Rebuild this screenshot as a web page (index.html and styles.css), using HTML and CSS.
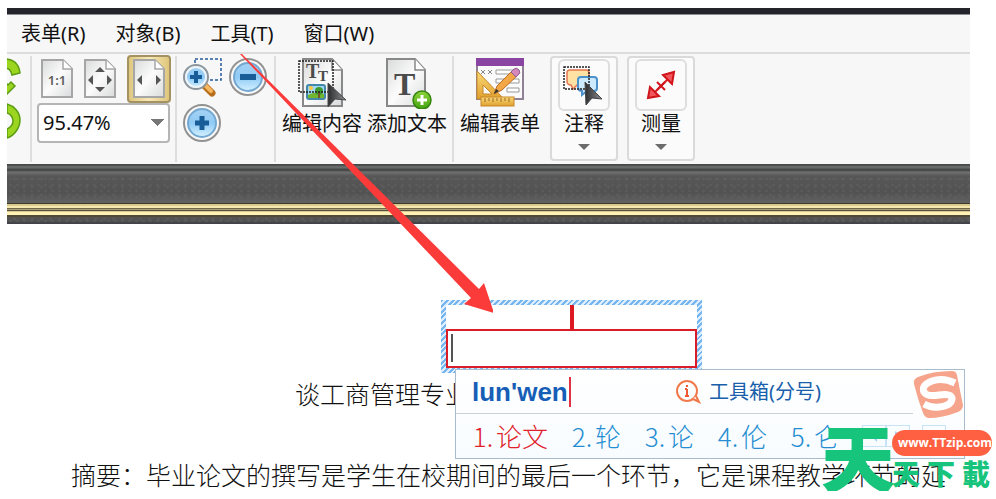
FILE: index.html
```html
<!DOCTYPE html>
<html lang="zh-CN">
<head>
<meta charset="utf-8">
<title>编辑内容</title>
<link rel="stylesheet" href="styles.css">
</head>
<body>
<svg class="defs" aria-hidden="true">
  <defs>
    <linearGradient id="paper" x1="0" y1="0" x2="1" y2="1"><stop offset="0" stop-color="#d9dadb"/><stop offset=".5" stop-color="#fcfcfc"/><stop offset="1" stop-color="#d9dadb"/></linearGradient>
    <linearGradient id="glass" x1="0" y1="0" x2="0" y2="1"><stop offset="0" stop-color="#a5d2f3"/><stop offset=".5" stop-color="#8fcaf6"/><stop offset="1" stop-color="#d4f1ff"/></linearGradient>
    <linearGradient id="dark" x1="0" y1="0" x2="1" y2="0"><stop offset="0" stop-color="#2c2d2f"/><stop offset="1" stop-color="#8b8d90"/></linearGradient>
    <linearGradient id="gold" x1="0" y1="0" x2="0" y2="1"><stop offset="0" stop-color="#fbd978"/><stop offset="1" stop-color="#e0a02d"/></linearGradient>
    <linearGradient id="leaf" x1="0" y1="0" x2="0" y2="1"><stop offset="0" stop-color="#8fd43a"/><stop offset="1" stop-color="#45a313"/></linearGradient>
  </defs>
</svg>
<div class="app">
  <div class="titlebar"></div>
  <nav class="menubar">
    <a href="#form">表单(R)</a><a href="#object">对象(B)</a><a href="#tools">工具(T)</a><a href="#window">窗口(W)</a>
  </nav>
  <div class="toolbar">
    <div class="rotate" aria-hidden="true">
      <svg width="14" height="100" viewBox="0 0 14 100">
        <g fill="#9bd51f" stroke="#5b9c12" stroke-width="1.5">
          <path d="M-4 3C5 2 12 7 13 17L5 19C4 14 2 12-4 12Z"/>
          <path d="M-4 24L1 29 4 26 8 30 -3 41Z"/>
          <path d="M0 48C7 50 13 56 13 64S7 80 0 82V73C4 71 6 68 6 65S4 58 0 57Z"/>
        </g>
      </svg>
    </div>
    <div class="group fit">
      <div class="row">
        <button aria-label="实际大小"><svg width="32" height="40" viewBox="0 0 32 40"><path d="M1 1H22L31 10V38H1Z" fill="url(#paper)" stroke="#a6a6a6" stroke-width="2"/><path d="M22 1V10H31" fill="#fff" stroke="#a6a6a6" stroke-width="1.5"/><text x="16" y="26" text-anchor="middle" class="ratio">1:1</text></svg></button>
        <button aria-label="适合页面"><svg width="32" height="40" viewBox="0 0 32 40"><path d="M1 1H22L31 10V38H1Z" fill="url(#paper)" stroke="#a6a6a6" stroke-width="2"/><path d="M22 1V10H31" fill="#fff" stroke="#a6a6a6" stroke-width="1.5"/><path d="M11 13H21L16 8ZM11 28H21L16 33ZM9 16V26L4 21ZM23 16V26L28 21Z" fill="#555"/></svg></button>
        <button class="selected" aria-label="适合宽度"><svg width="32" height="40" viewBox="0 0 32 40"><path d="M1 1H22L31 10V38H1Z" fill="url(#paper)" stroke="#a6a6a6" stroke-width="2"/><path d="M22 1V10H31" fill="#fff" stroke="#a6a6a6" stroke-width="1.5"/><path d="M9 16V26L4 21ZM23 16V26L28 21Z" fill="#555"/></svg></button>
      </div>
      <select aria-label="缩放比例"><option>95.47%</option><option>100%</option></select>
    </div>
    <div class="group zoom">
      <button aria-label="框选放大"><svg width="40" height="40" viewBox="0 0 40 40"><rect x="13" y="2" width="26" height="21" fill="none" stroke="#245b9b" stroke-width="1.5" stroke-dasharray="3 2"/><path d="M22 28L30 36" stroke="#b86f1c" stroke-width="7" stroke-linecap="round"/><path d="M23 28L29 34" stroke="#f7b75e" stroke-width="4" stroke-linecap="round"/><circle cx="14" cy="20" r="12" fill="url(#glass)" stroke="#8c9399" stroke-width="2"/><circle cx="14" cy="20" r="10" fill="none" stroke="#eef3f6" stroke-width="2"/><path d="M14 14V26M8 20H20" stroke="#195d98" stroke-width="4"/></svg></button>
      <button aria-label="缩小"><svg width="40" height="40" viewBox="0 0 40 40"><circle cx="20" cy="20" r="18" fill="#f8f8f8" stroke="#929292" stroke-width="2"/><circle cx="20" cy="20" r="14" fill="url(#glass)" stroke="#74a8d0" stroke-width="2"/><rect x="12" y="17" width="16" height="6" fill="#195d98"/></svg></button>
      <button aria-label="放大"><svg width="40" height="40" viewBox="0 0 40 40"><circle cx="20" cy="20" r="18" fill="#f8f8f8" stroke="#929292" stroke-width="2"/><circle cx="20" cy="20" r="14" fill="url(#glass)" stroke="#74a8d0" stroke-width="2"/><path d="M20 13V27M13 20H27" stroke="#195d98" stroke-width="5"/></svg></button>
    </div>
    <div class="group edit">
      <button class="tool"><svg width="50" height="52" viewBox="0 0 50 52"><path d="M6 2H35L45 13V49H6Z" fill="url(#paper)" stroke="#888" stroke-width="2"/><path d="M35 2V13H45" fill="#fff" stroke="#888" stroke-width="1.5"/><text x="9" y="21" class="glyph" font-size="20">T</text><text x="21" y="24" class="glyph" font-size="15">T</text><rect x="10" y="28" width="18" height="14" rx="2" fill="#9ed8f2" stroke="#4387aa" stroke-width="2"/><path d="M11 38Q18 34 27 37V41H11Z" fill="#70b62f"/><circle cx="22" cy="34" r="4" fill="#3e9a2e"/><path d="M21 35H23V41H21Z" fill="#77572c"/><circle cx="14" cy="31" r="2" fill="#ffc33c"/><rect x="2" y="4" width="34" height="31" fill="none" stroke="#222" stroke-width="1.5" stroke-dasharray="2 1"/><path d="M31 26L49 43 38 42 31 50Z" fill="url(#dark)" stroke="#4a4a4a"/></svg><span>编辑内容</span></button>
      <button class="tool"><svg width="50" height="52" viewBox="0 0 50 52"><path d="M5 2H33L43 13V49H5Z" fill="url(#paper)" stroke="#888" stroke-width="2"/><path d="M33 2V13H43" fill="#fff" stroke="#888" stroke-width="1.5"/><text x="12" y="38" class="glyph" font-size="32">T</text><circle cx="40" cy="43" r="9" fill="url(#leaf)" stroke="#378510" stroke-width="1.5"/><path d="M40 38V48M35 43H45" stroke="#fff" stroke-width="3"/></svg><span>添加文本</span></button>
    </div>
    <div class="group form">
      <button class="tool"><svg width="50" height="52" viewBox="0 0 50 52"><rect x="2" y="2" width="46" height="40" fill="#fafafa" stroke="#8f8297" stroke-width="2"/><path d="M1 1H49V9H1Z" fill="#8a45a2"/><path d="M6 13L10 17M10 13L6 17M13 13L17 17M17 13L13 17M6 22L10 26M10 22L6 26" stroke="#888"/><g fill="#fff" stroke="#999"><path d="M21 13H44V17H21ZM21 22H44V26H21ZM32 31H44V35H32Z"/></g><path d="M2 14L29 42H2Z M8 28V37H17Z" fill="url(#gold)" fill-rule="evenodd" stroke="#c7872a"/><rect x="6" y="40" width="33" height="9" fill="url(#gold)" stroke="#c7872a"/><path d="M10 41V45M14 41V44M18 41V45M22 41V44M26 41V45M30 41V44M34 41V45" stroke="#9a6824"/><path d="M19 37L22 29 38 13 43 18 27 33Z" fill="#f3a747" stroke="#b96c24"/><path d="M36 15L39 12Q42 10 44 13T43 18L41 20Z" fill="#d788ba" stroke="#8a5d95"/><path d="M19 37L21 32 24 34Z" fill="#333"/></svg><span>编辑表单</span></button>
    </div>
    <button class="card"><span class="face"><svg width="46" height="46" viewBox="0 0 46 46"><path d="M9 8H25Q28 8 28 11V20Q28 23 25 23H16L12 27 10 23Q6 23 6 19V11Q6 8 9 8Z" fill="#ffe2a3" stroke="#e6764f" stroke-width="1.5"/><path d="M20 15H33Q36 15 36 18V26Q36 29 33 29H26L21 33V29Q17 29 17 25V18Q17 15 20 15Z" fill="#cdeaff" stroke="#4b91cb" stroke-width="2"/><rect x="3" y="5" width="25" height="22" fill="none" stroke="#222" stroke-width="1.5" stroke-dasharray="2 1"/><path d="M24 20L41 37 31 36 25 43Z" fill="url(#dark)" stroke="#444"/></svg></span><span>注释</span><i class="caret"></i></button>
    <button class="card"><span class="face"><svg width="46" height="46" viewBox="0 0 46 46"><path d="M13 34L33 14" stroke="#df1820" stroke-width="2"/><path d="M10 36L12 25 21 34ZM36 10L34 22 25 13Z" fill="#f2555b" stroke="#cf141c" stroke-width="2"/><path d="M19 20L27 28M19 28L27 20" stroke="#cf141c" stroke-width="2"/></svg></span><span>测量</span><i class="caret"></i></button>
  </div>
  <div class="leather"><div class="trim"></div></div>
  <main class="document">
    <div class="field">
      <i class="stem"></i>
      <input type="text" aria-label="文本内容">
      <i class="insertion"></i>
      <section class="ime" aria-label="输入法">
        <div class="compose">
          <strong>lun'wen</strong>
          <a href="#toolbox"><svg width="26" height="26" viewBox="0 0 26 26"><circle cx="12" cy="12" r="10" fill="none" stroke="#f17a4c" stroke-width="2"/><path d="M18 20L24 23 21 17" fill="#fff" stroke="#f17a4c" stroke-width="2"/><path d="M12 10V17M12 6V8M10 10H12M10 17H14" stroke="#ed5930" stroke-width="2"/></svg>工具箱(分号)</a>
        </div>
        <div class="candidates">
          <button class="first"><b>1.</b>论文</button><button><b>2.</b>轮</button><button><b>3.</b>论</button><button><b>4.</b>伦</button><button><b>5.</b>仑</button>
          <div class="pager"><button aria-label="上一页"><svg width="22" height="20"><path d="M14 5V16L8 10Z" fill="#a6d3f2"/></svg></button><button aria-label="下一页"><svg width="22" height="20"><path d="M8 5V16L14 10Z" fill="#a6d3f2"/></svg></button><button class="more" aria-label="更多"><svg width="22" height="20"><path d="M6 8H16L11 14Z" fill="#a6d3f2"/></svg></button></div>
        </div>
        <svg class="sogou" width="52" height="50" viewBox="0 0 52 50" aria-hidden="true"><path d="M6 7Q20 1 40 1Q44 1 45 5Q48 21 51 35Q51 40 46 42Q30 48 17 48Q13 48 11 43Q6 30 2 14Q1 9 6 7Z" fill="#f6a58c"/><path d="M43 13Q31 7 20 11Q9 15 12 22Q15 27 27 25Q40 23 40 29Q39 36 27 37Q19 38 12 34" fill="none" stroke="#fff" stroke-width="7"/></svg>
      </section>
    </div>
    <h1>谈工商管理专业</h1>
    <p>摘要：毕业论文的撰写是学生在校期间的最后一个环节，它是课程教学环节的延</p>
  </main>
  <svg class="pointer" width="260" height="264" viewBox="0 0 260 264" aria-hidden="true"><path d="M7 1L9 1 246 236 251 230 261 260 231 251 238 245Z" fill="#fb3b3a"/></svg>
  <aside class="watermark"><span class="big">天</span><div><a href="#site">www.TTzip.com</a><span class="small"><span>天</span><span>下</span><span>載</span></span></div></aside>
</div>
</body>
</html>
```
FILE: styles.css
```css
* { box-sizing: border-box; }
body {
  margin: 0;
  background: #fff;
  color: #111;
  font: 20px/24px "Noto Sans", "Noto Sans CJK SC", sans-serif;
  overflow: hidden;
}
button, input, select { font: inherit; color: inherit; }
button { padding: 0; border: 0; background: none; }
a { color: inherit; text-decoration: none; }
svg { display: block; flex: none; }
.defs { position: absolute; width: 0; height: 0; }
.app { position: relative; margin: 8px 26px 0 7px; }

.titlebar { height: 7px; background: #23242c; border-bottom: 1px solid #8d8e93; }
.menubar {
  display: flex;
  gap: 30px;
  height: 39px;
  padding: 7px 14px;
  background: #f7f7f7;
  border-bottom: 2px solid #dcdcdc;
}

.toolbar { display: flex; height: 110px; padding: 2px 0; background: #f7f7f7; }
.rotate { width: 25px; border-right: 2px solid #dedede; }
.group { border-right: 2px solid #dedede; }
.fit { width: 145px; padding: 0 4px 0 5px; }
.row { display: flex; align-items: center; justify-content: space-between; height: 46px; padding-left: 4px; }
.row .selected {
  padding: 2px 4px;
  border: 2px solid #a49262;
  border-radius: 4px;
  background: linear-gradient(90deg, #dfc77e, #f8e9b9, #dfc67b);
}
.fit select {
  appearance: none;
  display: block;
  width: 133px;
  height: 40px;
  margin-top: 1px;
  padding: 0 4px;
  border: 2px solid #b5b5b5;
  border-radius: 4px;
  background: linear-gradient(to bottom left, transparent 50%, transparent 50%), conic-gradient(from -45deg at 50% 100%, #777 90deg, transparent 0) no-repeat 111px 14px / 14px 7px, #fff;
}
.zoom { display: grid; grid-template-columns: 40px 40px; gap: 6px; align-content: start; width: 99px; padding: 1px 5px; }
.edit { display: flex; gap: 5px; width: 178px; padding-left: 6px; }
.form { width: 96px; padding-left: 6px; border: 0; }
.tool { display: flex; flex-direction: column; align-items: center; justify-content: flex-start; width: 80px; white-space: nowrap; padding-top: 1px; }
.tool span { margin-top: 3px; }
.ratio { font: 600 13px "Noto Sans", sans-serif; fill: #606060; }
.glyph { font-family: "Liberation Serif", serif; font-weight: 700; fill: #4b4b4b; }
.card {
  display: flex;
  flex-direction: column;
  align-items: center;
  width: 68px;
  height: 105px;
  margin-right: 9px;
  padding: 1px 0;
  border: 2px solid #dadada;
  border-radius: 4px;
  background: #fbfbfb;
}
.face { display: grid; place-items: center; width: 52px; height: 52px; margin-bottom: 1px; border: 2px solid #dedede; border-radius: 6px; }
.caret { margin-top: 8px; border: 6px solid transparent; border-top-color: #6c6c6c; border-bottom: 0; }

.leather {
  height: 60px;
  padding-top: 39px;
  background:
    linear-gradient(#454846 0 1px, #707372 3px, #515352 5px, #3b3e3d 6px, #707070 8px, transparent 12px),
    radial-gradient(#66666666 1px, transparent 2px) 0 0 / 7px 6px,
    radial-gradient(#66666666 1px, transparent 2px) 3px 3px / 9px 8px,
    linear-gradient(#5a5a5a, #525252 50%, #606060 65%, #505050);
  border-bottom: 2px solid #43444a;
}
.trim { height: 14px; background: linear-gradient(#3e3a2b 0 1px, #d9c98e 1px 3px, #f6e9b0 3px 5px, #706848 5px 6px, #aaa07c 6px 7px, #564f3d 7px 8px, #d8ca92 8px 9px, #fff0b5 9px 12px, #504a34 12px); }

.document { position: relative; height: 267px; padding: 76px 0 0; }
.field {
  position: relative;
  width: 261px;
  height: 73px;
  margin-left: 434px;
  padding: 5px;
  background:
    linear-gradient(#fff, #fff) content-box,
    repeating-linear-gradient(135deg, #77b5ee 0 2px, #dceeff 2px 4px);
}
.stem { display: block; width: 4px; height: 24px; margin: 0 auto; background: #dc1820; }
.field input { display: block; width: 100%; height: 39px; padding: 0 8px; border: 2px solid #d91c27; outline: 0; background: #fff; }
.insertion { position: absolute; left: 10px; top: 34px; width: 2px; height: 28px; background: #555; }
.ime {
  position: absolute;
  z-index: 1;
  left: 14px;
  top: 69px;
  width: 510px;
  height: 90px;
  background: linear-gradient(#fff, #f8fcff);
  border: 1px solid #a9bccd;
}
.compose { display: flex; align-items: center; justify-content: space-between; height: 44px; width: 457px; padding: 0 92px 0 16px; border-bottom: 1px solid #c8d1da; }
.compose strong { padding-right: 1px; border-right: 2px solid #e13442; color: #175eb7; font: 700 26px/30px "Liberation Sans", sans-serif; }
.compose a { display: flex; align-items: center; gap: 8px; color: #195fab; }
.candidates { display: flex; align-items: center; gap: 21px; height: 44px; padding-left: 14px; color: #258ed2; font-size: 26px; line-height: 32px; font-weight: 400; }
.candidates button { display: flex; font-family: "Noto Sans CJK SC", sans-serif; font-weight: 300; }
.candidates b { width: 26px; font-weight: 300; }
.candidates .first { color: #e0212a; }
.pager { display: flex; margin-left: 1px; }
.pager button { border: 1px solid #c8e3f5; }
.pager .more { margin-left: 12px; }
.sogou { position: absolute; right: 0; top: 0; }
h1, p { margin: 0; font: 300 25px/34px "Noto Sans CJK SC", sans-serif; color: #111; white-space: nowrap; }
h1 { padding-left: 288px; margin-top: 3px; }
p { padding-left: 64px; margin-top: 47px; }

.pointer { position: absolute; z-index: 2; left: 226px; top: 45px; }
.watermark { position: absolute; z-index: 3; left: 814px; top: 410px; display: flex; color: #17c47c; font-family: "Noto Sans CJK TC", sans-serif; font-weight: 900; }
.big { width: 71px; font-size: 74px; line-height: 74px; }
.watermark div { padding-top: 12px; }
.watermark a { display: block; width: 100px; padding: 0 6px; border-radius: 13px; background: #ff6042; color: #fff; font: 700 12px/26px "Open Sans", sans-serif; text-align: center; }
.small { display: flex; gap: 7px; font-size: 28px; line-height: 34px; font-weight: 900; }
```
